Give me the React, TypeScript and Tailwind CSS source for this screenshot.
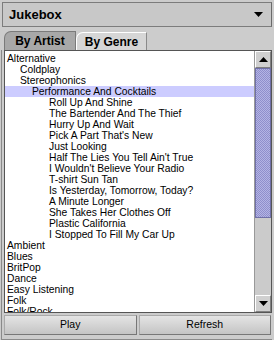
import React from 'react';

type Row = { text: string; level: number; selected?: boolean };

const rows: Row[] = [
  { text: 'Alternative', level: 0 },
  { text: 'Coldplay', level: 1 },
  { text: 'Stereophonics', level: 1 },
  { text: 'Performance And Cocktails', level: 2, selected: true },
  { text: 'Roll Up And Shine', level: 3 },
  { text: 'The Bartender And The Thief', level: 3 },
  { text: 'Hurry Up And Wait', level: 3 },
  { text: "Pick A Part That's New", level: 3 },
  { text: 'Just Looking', level: 3 },
  { text: "Half The Lies You Tell Ain't True", level: 3 },
  { text: "I Wouldn't Believe Your Radio", level: 3 },
  { text: 'T-shirt Sun Tan', level: 3 },
  { text: 'Is Yesterday, Tomorrow, Today?', level: 3 },
  { text: 'A Minute Longer', level: 3 },
  { text: 'She Takes Her Clothes Off', level: 3 },
  { text: 'Plastic California', level: 3 },
  { text: 'I Stopped To Fill My Car Up', level: 3 },
  { text: 'Ambient', level: 0 },
  { text: 'Blues', level: 0 },
  { text: 'BritPop', level: 0 },
  { text: 'Dance', level: 0 },
  { text: 'Easy Listening', level: 0 },
  { text: 'Folk', level: 0 },
  { text: 'Folk/Rock', level: 0 },
];

const indent = ['pl-[2px]', 'pl-[15px]', 'pl-[27px]', 'pl-[44px]'];

function Arrow({ up }: { up?: boolean }) {
  return (
    <svg width="9" height="5" viewBox="0 0 9 5">
      <polygon points={up ? '4.5,0 9,5 0,5' : '0,0 9,0 4.5,5'} fill="#000" />
    </svg>
  );
}

function ScrollButton({ up }: { up?: boolean }) {
  return (
    <div className="h-[17px] flex items-center justify-center bg-[#d0d0d0] border-t border-l border-t-white border-l-white border-r border-b border-r-[#808080] border-b-[#808080]">
      <Arrow up={up} />
    </div>
  );
}

export default function App() {
  return (
    <div className="w-[274px] h-[340px] bg-[#cccccc] flex flex-col font-['Liberation_Sans',Arial,sans-serif] text-black">
      <div className="mx-[2px] mt-[2px] h-[25px] flex items-center justify-between pl-[6px] pr-[8px] bg-[#c8c8c8] border border-[#7c7c7c] border-r-[#6a6a6a]">
        <span className="text-[13px] font-bold">Jukebox</span>
        <Arrow />
      </div>

      <div className="mt-[4px] h-[19px] flex items-end pl-[4px] pr-[3px]">
        <div className="h-[19px] w-[72px] flex items-center justify-center bg-[#a8a8a8] border border-b-0 border-[#7a7a7a] rounded-tl-[7px] text-[12px] font-bold">
          By Artist
        </div>
        <div className="h-[18px] w-[71px] flex items-center justify-center bg-[#d6d6d6] border border-b-0 border-[#8a8a8a] border-t-white border-l-white rounded-tl-[7px] text-[12px] font-bold">
          By Genre
        </div>
        <div className="flex-1" />
      </div>

      <div className="ml-[1px] mr-[2px] flex-1 flex flex-col border-l border-[#8a8a8a] pl-[2px] pb-[3px] border-b">
        <div className="h-[263px] flex bg-white border border-[#555555]">
          <div className="flex-1 overflow-hidden pt-[2px] text-[10.3px]">
            {rows.map((r, i) => (
              <div
                key={i}
                className={`h-[11px] leading-[11px] whitespace-nowrap ${indent[r.level]} ${r.selected ? 'bg-[#ccccff]' : ''}`}
              >
                {r.text}
              </div>
            ))}
          </div>
          <div className="w-[17px] flex flex-col bg-[#c8c8c8] border-l border-[#999999]">
            <ScrollButton up />
            <div className="h-[150px] bg-[repeating-conic-gradient(#8f8fcc_0_25%,#b4b4e4_0_50%)] bg-[length:2px_2px] border border-[#7070a8]" />
            <div className="flex-1 bg-[#cbcbcb]" />
            <ScrollButton />
          </div>
        </div>
        <div className="mt-[2px] h-[20px] flex gap-[2px] pr-[1px] text-[10.5px]">
          <button className="flex-1 bg-[linear-gradient(#e4e4e4,#c4c4c4)] border border-[#777777] border-t-[#aaaaaa] border-l-[#aaaaaa]">
            Play
          </button>
          <button className="flex-1 bg-[linear-gradient(#e4e4e4,#c4c4c4)] border border-[#777777] border-t-[#aaaaaa] border-l-[#aaaaaa]">
            Refresh
          </button>
        </div>
      </div>
    </div>
  );
}
